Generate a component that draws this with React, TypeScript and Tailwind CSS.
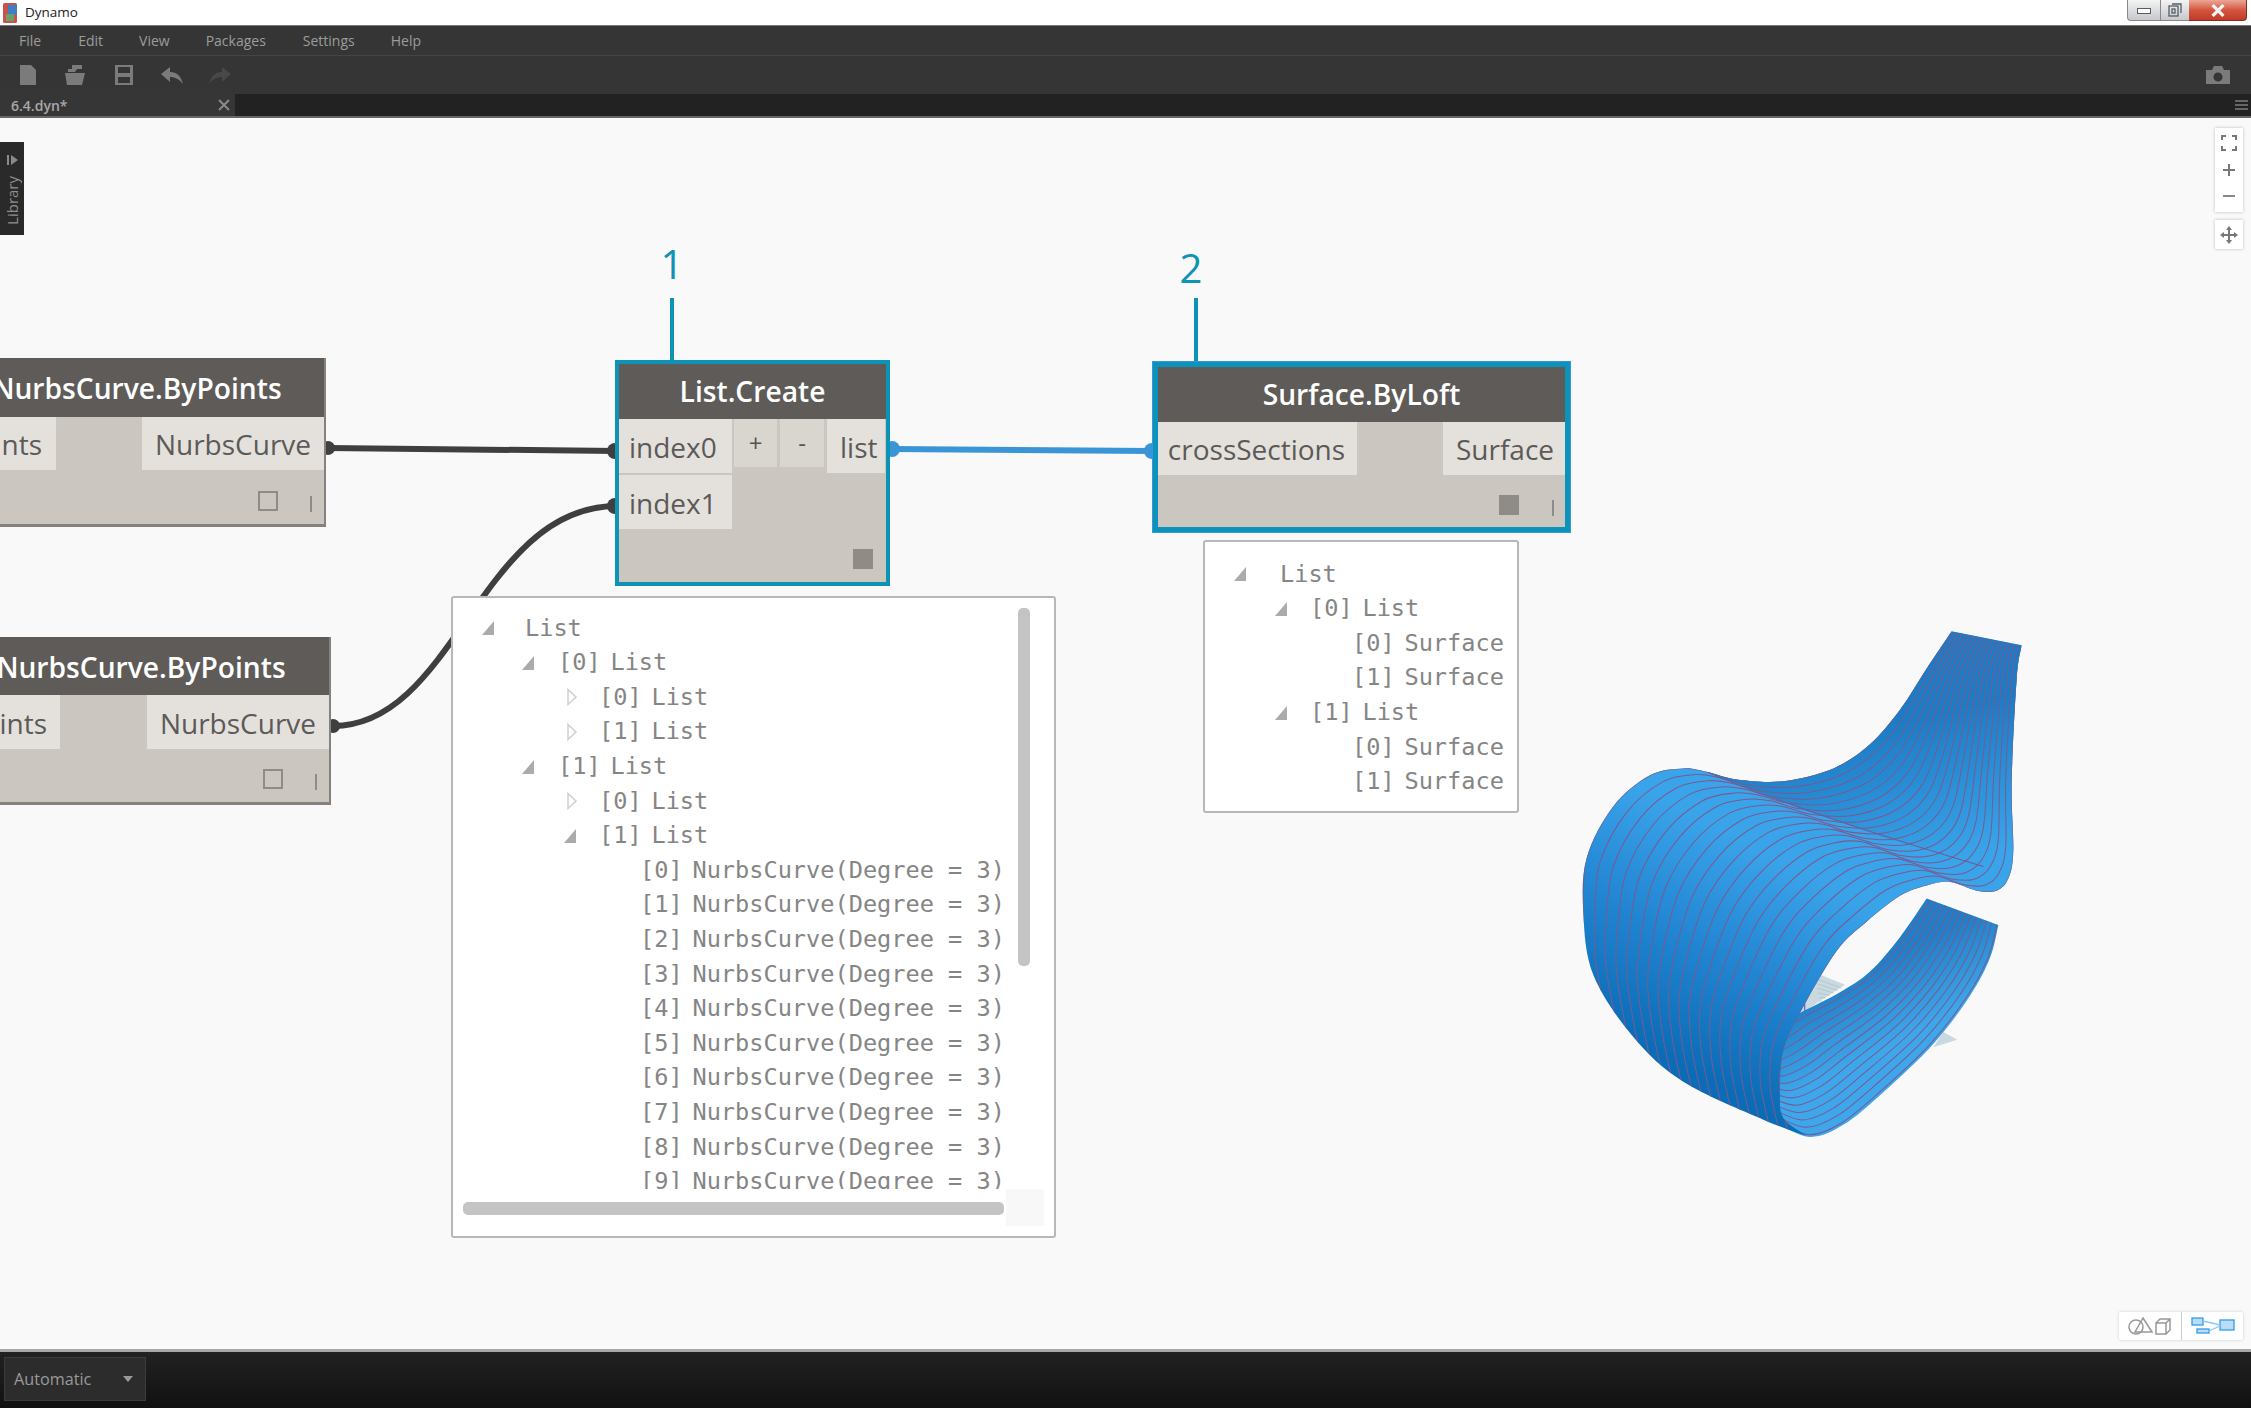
import type { ReactNode } from "react";

const FONT = "font-['Open_Sans',sans-serif]";
const MONO = "font-['DejaVu_Sans_Mono',monospace]";

type Pt = [number, number];

// Catmull-Rom through the points, good enough for the contour lines
const smooth = (pts: Pt[]) => {
  let d = `M${pts[0][0]} ${pts[0][1]}`;
  for (let i = 0; i < pts.length - 1; i++) {
    const p0 = pts[Math.max(i - 1, 0)];
    const p1 = pts[i];
    const p2 = pts[i + 1];
    const p3 = pts[Math.min(i + 2, pts.length - 1)];
    const c1x = p1[0] + (p2[0] - p0[0]) / 6;
    const c1y = p1[1] + (p2[1] - p0[1]) / 6;
    const c2x = p2[0] - (p3[0] - p1[0]) / 6;
    const c2y = p2[1] - (p3[1] - p1[1]) / 6;
    d += `C${c1x} ${c1y} ${c2x} ${c2y} ${p2[0]} ${p2[1]}`;
  }
  return d;
};

const mix = (a: Pt[], b: Pt[], t: number): Pt[] =>
  a.map((p, i) => [p[0] + (b[i][0] - p[0]) * t, p[1] + (b[i][1] - p[1]) * t]);

// contour family of the main sheet, first and last line
const lineOuter: Pt[] = [
  [170, 1300], [135, 1150], [105, 1000], [100, 880], [110, 720], [190, 570], [300, 480], [400, 460],
  [470, 470], [560, 492], [700, 497], [850, 460], [960, 390], [1050, 290], [1130, 170], [1205, 62],
];
const lineInner: Pt[] = [
  [720, 1540], [690, 1400], [700, 1280], [750, 1170], [860, 990], [950, 905], [1050, 830], [1130, 800],
  [1200, 790], [1280, 815], [1340, 815], [1375, 780], [1390, 700], [1385, 500], [1400, 200], [1415, 102],
];
// silhouette of the main sheet
const bodyEdge: Pt[] = [
  [770, 1527], [640, 1480], [400, 1370], [250, 1240], [130, 1060], [100, 880], [110, 720], [190, 570], [300, 480],
  [400, 460], [470, 470], [560, 492], [700, 497], [850, 460], [960, 390], [1050, 290], [1130, 170], [1205, 62],
];
const bodyBack: Pt[] = [
  [1415, 102], [1400, 200], [1385, 500], [1390, 700], [1375, 780], [1340, 815], [1280, 815], [1200, 790], [1130, 800],
  [1050, 830], [950, 905], [860, 990], [750, 1170], [700, 1280], [690, 1400], [700, 1475], [770, 1527],
];
const bandOuter: Pt[] = [
  [1345, 915], [1320, 1010], [1260, 1120], [1150, 1260], [1000, 1400], [880, 1495], [780, 1530], [680, 1490],
];
const bandInner: Pt[] = [
  [1130, 838], [1050, 950], [960, 1050], [870, 1110], [750, 1170], [700, 1200], [650, 1230], [620, 1250],
];

const bodyShape = `${smooth(bodyEdge)}L${smooth(bodyBack).slice(1)}Z`;
const bandShape = `${smooth(bandOuter)}L${smooth([...bandInner].reverse()).slice(1)}Z`;

const LoftSurface = () => (
  <svg viewBox="0 0 1500 1568" preserveAspectRatio="none" className="absolute left-[1550px] top-[492px] h-[540px] w-[500px]">
    <defs>
      <linearGradient id="bodyFill" gradientUnits="userSpaceOnUse" x1="450" y1="1350" x2="750" y2="750">
        <stop offset="0" stopColor="#0a6cb6" />
        <stop offset="0.5" stopColor="#2285d2" />
        <stop offset="1" stopColor="#3aa4ea" />
      </linearGradient>
      <linearGradient id="topFill" gradientUnits="userSpaceOnUse" x1="1150" y1="300" x2="1250" y2="720">
        <stop offset="0" stopColor="#1b7cc5" />
        <stop offset="1" stopColor="#3aa4ea" />
      </linearGradient>
      <linearGradient id="bandFill" gradientUnits="userSpaceOnUse" x1="1080" y1="980" x2="1180" y2="1180">
        <stop offset="0" stopColor="#1f7fc8" />
        <stop offset="1" stopColor="#3ea6ea" />
      </linearGradient>
      <clipPath id="bodyClip">
        <path d={bodyShape} />
      </clipPath>
      <clipPath id="bandClip">
        <path d={bandShape} />
      </clipPath>
    </defs>
    <path d="M800 1055L885 1088L740 1180Z" fill="#c8dae0" />
    <path d="M1180 1225L1222 1248L1150 1270Z" fill="#c8dae0" />
    {[0, 1, 2, 3, 4, 5].map((i) => (
      <path key={i} d={`M${795 + i * 3} ${1070 + i * 14}L${875 - i * 12} ${1098 + i * 7}`} stroke="#9db4bd" strokeWidth="1.5" />
    ))}
    <path d="M764 1142V1168" stroke="#6a6ae0" strokeWidth="4" />
    <path d={bandShape} fill="url(#bandFill)" />
    <g clipPath="url(#bandClip)">
      {Array.from({ length: 14 }, (_, i) => (
        <path key={i} d={smooth(mix(bandOuter, bandInner, (i + 0.3) / 14))} fill="none" stroke="#7a5a90" strokeWidth="3" />
      ))}
    </g>
    <path d={bodyShape} fill="url(#bodyFill)" />
    <g clipPath="url(#bodyClip)">
      <path d="M470 470C560 492 700 497 850 460C960 390 1050 290 1205 62L1415 102L1385 500L1390 700L1300 745L1000 660L760 580Z" fill="url(#topFill)" />
      {Array.from({ length: 20 }, (_, i) => (
        <path key={i} d={smooth(mix(lineOuter, lineInner, i / 19))} fill="none" stroke="#7a5a90" strokeWidth="3" />
      ))}
      <path d="M470 470C640 540 900 630 1300 745" fill="none" stroke="#6f5a90" strokeWidth="3" />
    </g>
  </svg>
);

const Port = ({ label, className }: { label: string; className: string }) => (
  <div className={`flex items-center overflow-hidden bg-[#e4e1dc] pt-[1px] text-[28px] text-[#5c5a58] ${className}`}>{label}</div>
);

const NodeTitle = ({ children, className }: { children: ReactNode; className: string }) => (
  <div className={`flex items-center justify-center whitespace-nowrap bg-[#5e5b58] text-[28.2px] font-semibold text-white ${className}`}>
    {children}
  </div>
);

const FreezeBox = ({ filled }: { filled?: boolean }) => (
  <div className={`h-[20px] w-[20px] border-2 border-[#8f8b86] ${filled ? "bg-[#8f8b86]" : ""}`} />
);

const Tri = ({ open }: { open?: boolean }) =>
  open ? (
    <svg viewBox="0 0 14 16" className="h-[16px] w-[14px] shrink-0">
      <path d="M13 1V15H1Z" fill="#ababab" />
    </svg>
  ) : (
    <svg viewBox="0 0 14 18" className="h-[18px] w-[14px] shrink-0">
      <path d="M3 1.5L11 9L3 16.5Z" fill="none" stroke="#cfcfcf" strokeWidth="1.5" />
    </svg>
  );

type Row = { index?: string; label: string; indent: string; gap?: string; open?: boolean };

const Rows = ({ rows }: { rows: Row[] }) => (
  <>
    {rows.map((row, i) => (
      <div key={i} className={`flex h-[34.6px] items-center whitespace-pre text-[23.6px] text-[#858585] ${MONO} ${row.indent}`}>
        {row.gap && <Tri open={row.open} />}
        {row.index && <span className={row.gap}>{row.index}</span>}
        <span className={row.index ? "ml-[9.8px]" : row.gap}>{row.label}</span>
      </div>
    ))}
  </>
);

const curves: Row[] = Array.from({ length: 10 }, (_, i) => ({
  index: `[${i}]`,
  label: "NurbsCurve(Degree = 3)",
  indent: "pl-[187px]",
}));

const listRows: Row[] = [
  { label: "List", indent: "pl-[28px]", gap: "ml-[30px]", open: true },
  { index: "[0]", label: "List", indent: "pl-[68px]", gap: "ml-[23px]", open: true },
  { index: "[0]", label: "List", indent: "pl-[112px]", gap: "ml-[20px]" },
  { index: "[1]", label: "List", indent: "pl-[112px]", gap: "ml-[20px]" },
  { index: "[1]", label: "List", indent: "pl-[68px]", gap: "ml-[23px]", open: true },
  { index: "[0]", label: "List", indent: "pl-[112px]", gap: "ml-[20px]" },
  { index: "[1]", label: "List", indent: "pl-[110px]", gap: "ml-[22px]", open: true },
  ...curves,
];

const surfaceRows: Row[] = [
  { label: "List", indent: "pl-[28px]", gap: "ml-[33px]", open: true },
  { index: "[0]", label: "List", indent: "pl-[69px]", gap: "ml-[22px]", open: true },
  { index: "[0]", label: "Surface", indent: "pl-[147px]" },
  { index: "[1]", label: "Surface", indent: "pl-[147px]" },
  { index: "[1]", label: "List", indent: "pl-[69px]", gap: "ml-[22px]", open: true },
  { index: "[0]", label: "Surface", indent: "pl-[147px]" },
  { index: "[1]", label: "Surface", indent: "pl-[147px]" },
];

const Wires = () => (
  <svg viewBox="0 0 2251 1231" className="absolute left-0 top-0 h-[1231px] w-[2251px]" fill="none">
    <path d="M328 330L617 333" stroke="#3f3f3f" strokeWidth="6" />
    <path d="M333 608C455 608 480 388 617 388" stroke="#3f3f3f" strokeWidth="6" />
    <path d="M892 331L1152 333" stroke="#3a95d6" strokeWidth="6" />
    <circle cx="328" cy="330" r="7" fill="#3f3f3f" />
    <circle cx="333" cy="608" r="7" fill="#3f3f3f" />
    <circle cx="615" cy="333" r="8" fill="#3f3f3f" />
    <circle cx="615" cy="388" r="8" fill="#3f3f3f" />
    <circle cx="892" cy="331" r="8" fill="#3a95d6" />
    <circle cx="1152" cy="333" r="8" fill="#3a95d6" />
    <path d="M672 180V242M1196 180V243" stroke="#0d93b3" strokeWidth="4" />
  </svg>
);

const toolIcon = "h-[22px] w-[24px] fill-[#7b7b7b]";

export default function App() {
  return (
    <div className={`flex h-[1408px] w-[2251px] flex-col overflow-hidden bg-white ${FONT}`}>
      {/* title bar */}
      <div className="flex h-[25px] shrink-0 items-center bg-white pl-[3px] text-[13.5px] text-[#222]">
        <svg viewBox="0 0 14 20" className="h-[20px] w-[14px]">
          <rect width="14" height="20" rx="1.5" fill="#c9534a" />
          <rect x="5" y="2" width="9" height="10" fill="#3f7fc4" />
          <rect x="3" y="11" width="8" height="7" fill="#6fa06a" />
        </svg>
        <span className="ml-[8px]">Dynamo</span>
        <div className="ml-auto mr-[4px] flex h-[21px] self-start">
          <div className="flex w-[33px] items-center justify-center rounded-bl-[4px] border-b border-l border-[#888] bg-gradient-to-b from-[#f4f4f4] to-[#c6c8cc]">
            <div className="mt-[2px] h-[6px] w-[14px] border border-[#555c68] bg-white" />
          </div>
          <div className="flex w-[29px] items-center justify-center border-b border-l border-[#888] bg-gradient-to-b from-[#f4f4f4] to-[#c6c8cc]">
            <svg viewBox="0 0 14 14" className="h-[14px] w-[14px]" fill="none" stroke="#555c68" strokeWidth="1.3">
              <path d="M4 1H13V10" />
              <rect x="1" y="3" width="9" height="10" />
              <rect x="4" y="6" width="3" height="4" />
            </svg>
          </div>
          <div className="flex w-[58px] items-center justify-center rounded-br-[4px] border-b border-r border-[#883020] bg-gradient-to-b from-[#e8a698] via-[#d4553e] to-[#c23a28]">
            <svg viewBox="0 0 14 12" className="h-[13px] w-[16px]">
              <path d="M2 1L12 11M12 1L2 11" stroke="#f2f2f2" strokeWidth="3" />
            </svg>
          </div>
        </div>
      </div>

      {/* menu */}
      <div className="flex h-[31px] shrink-0 items-center border-y border-t-[#777] border-b-[#454545] bg-[#353535] text-[14px] text-[#9c9c9c]">
        <span className="ml-[19px]">File</span>
        <span className="ml-[37px]">Edit</span>
        <span className="ml-[36px]">View</span>
        <span className="ml-[36px]">Packages</span>
        <span className="ml-[37px]">Settings</span>
        <span className="ml-[36px]">Help</span>
      </div>

      {/* toolbar */}
      <div className="flex h-[38px] shrink-0 items-center bg-[#353535] pl-[16px] pr-[20px]">
        <svg viewBox="0 0 24 22" className={toolIcon}>
          <path d="M4 1H15L20 6V21H4Z" />
        </svg>
        <svg viewBox="0 0 24 22" className={`ml-[23px] ${toolIcon}`}>
          <path d="M9 1H19V5H14L12 8H5V5H9ZM2 9H22L19 21H4Z" />
        </svg>
        <svg viewBox="0 0 24 22" className={`ml-[25px] ${toolIcon}`}>
          <path fillRule="evenodd" d="M3 1H21V21H3ZM6 3V9H18V3ZM6 13V19H18V13Z" />
        </svg>
        <svg viewBox="0 0 24 22" className={`ml-[24px] ${toolIcon}`}>
          <path d="M10 3V8C17 8 21 12 23 20C19 15 15 13 10 13V18L1 10Z" />
        </svg>
        <svg viewBox="0 0 24 22" className="ml-[24px] h-[22px] w-[24px] fill-[#484848]">
          <path d="M14 3V8C7 8 3 12 1 20C5 15 9 13 14 13V18L23 10Z" />
        </svg>
        <svg viewBox="0 0 26 18" className="ml-auto h-[18px] w-[26px] fill-[#7b7b7b]">
          <path fillRule="evenodd" d="M1 4H7L9 0H17L19 4H25V18H1ZM13 6.5A4.5 4.5 0 1 0 13 15.5A4.5 4.5 0 1 0 13 6.5Z" />
        </svg>
      </div>

      {/* tabs */}
      <div className="flex h-[24px] shrink-0 items-center border-b-2 border-[#666] bg-[#222]">
        <div className="flex h-full w-[235px] items-center justify-between bg-[#363636] pl-[11px] pr-[5px] text-[14px] font-semibold text-[#a8a8a8]">
          <span>6.4.dyn*</span>
          <svg viewBox="0 0 12 12" className="h-[12px] w-[12px]">
            <path d="M1 1L11 11M11 1L1 11" stroke="#8a8a8a" strokeWidth="2" />
          </svg>
        </div>
        <div className="ml-auto mr-[3px] flex w-[13px] flex-col gap-[2px]">
          <div className="h-[2px] bg-[#666]" />
          <div className="h-[2px] bg-[#666]" />
          <div className="h-[2px] bg-[#666]" />
        </div>
      </div>

      {/* canvas */}
      <div className="relative flex-1 overflow-hidden bg-[#f9f9f9]">
        <Wires />

        <div className="absolute left-0 top-[24px] flex h-[93px] w-[24px] flex-col items-center bg-[#2a2a2a] pt-[13px]">
          <svg viewBox="0 0 11 10" className="h-[10px] w-[11px] fill-[#8a8a8a]">
            <path d="M0 0H2V10H0ZM4 0L11 5L4 10Z" />
          </svg>
          <span className="mt-[11px] rotate-180 text-[15px] leading-[15px] text-[#8f8f8f] [writing-mode:vertical-rl]">Library</span>
        </div>

        <div className="absolute left-[672px] top-[122px] -translate-x-1/2 text-[40px] leading-[48px] text-[#0d93b3]">1</div>
        <div className="absolute left-[1191px] top-[126px] -translate-x-1/2 text-[40px] leading-[48px] text-[#0d93b3]">2</div>

        {/* NurbsCurve.ByPoints, upper */}
        <div className="absolute left-[-50px] top-[240px] h-[169px] w-[376px] border-b-[3px] border-r-2 border-[#85827d] bg-[#cbc6bf]">
          <NodeTitle className="h-[59px] pt-[2px]">NurbsCurve.ByPoints</NodeTitle>
          <div className="flex h-[53px] justify-between">
            <Port label="points" className="w-[106px] justify-end pr-[14px]" />
            <Port label="NurbsCurve" className="w-[182px] justify-center" />
          </div>
          <div className="flex items-center justify-end pr-[12px] pt-[20px]">
            <FreezeBox />
            <div className="ml-[32px] mt-[6px] h-[16px] w-[2px] bg-[#8f8b86]" />
          </div>
        </div>

        {/* NurbsCurve.ByPoints, lower */}
        <div className="absolute left-[-47px] top-[519px] h-[168px] w-[378px] border-b-[3px] border-r-2 border-[#85827d] bg-[#cbc6bf]">
          <NodeTitle className="h-[58px] pt-[2px]">NurbsCurve.ByPoints</NodeTitle>
          <div className="flex h-[54px] justify-between">
            <Port label="points" className="w-[107px] justify-end pr-[13px]" />
            <Port label="NurbsCurve" className="w-[182px] justify-center" />
          </div>
          <div className="flex items-center justify-end pr-[12px] pt-[19px]">
            <FreezeBox />
            <div className="ml-[32px] mt-[6px] h-[16px] w-[2px] bg-[#8f8b86]" />
          </div>
        </div>

        {/* List.Create */}
        <div className="absolute left-[615px] top-[242px] h-[226px] w-[275px] border-4 border-[#0d93b3] bg-[#cbc6bf]">
          <NodeTitle className="h-[55px]">List.Create</NodeTitle>
          <div className="flex items-start">
            <Port label="index0" className="h-[54px] w-[113px] pl-[10px]" />
            <div className="ml-[2px] flex h-[48px] w-[43px] items-center justify-center bg-[#d9d6d0] text-[24px] text-[#55534f]">+</div>
            <div className="ml-[3px] flex h-[48px] w-[44px] items-center justify-center bg-[#d9d6d0] text-[24px] text-[#55534f]">-</div>
            <Port label="list" className="ml-[3px] h-[54px] w-[58px] pl-[13px]" />
          </div>
          <Port label="index1" className="mt-[2px] h-[54px] w-[113px] pl-[10px]" />
          <div className="flex justify-end pr-[13px] pt-[20px]">
            <FreezeBox filled />
          </div>
        </div>

        {/* Surface.ByLoft */}
        <div className="absolute left-[1153px] top-[244px] h-[170px] w-[417px] border-[5px] border-[#0b93bb] bg-[#cbc6bf] shadow-[0_0_0_1px_#3a95d6]">
          <NodeTitle className="h-[55px] pb-[1px]">Surface.ByLoft</NodeTitle>
          <div className="flex h-[53px] justify-between">
            <Port label="crossSections" className="w-[199px] justify-center pr-[2px]" />
            <Port label="Surface" className="w-[122px] justify-center pl-[2px]" />
          </div>
          <div className="flex items-center justify-end pr-[11px] pt-[19px]">
            <FreezeBox filled />
            <div className="ml-[33px] mt-[6px] h-[16px] w-[2px] bg-[#8f8b86]" />
          </div>
        </div>

        {/* list.create preview */}
        <div className="absolute left-[451px] top-[478px] h-[642px] w-[605px] rounded-[3px] border-2 border-[#b8b8b8] bg-white">
          <div className="h-[591px] overflow-hidden pt-[13px]">
            <Rows rows={listRows} />
          </div>
          <div className="absolute left-[565px] top-[10px] h-[358px] w-[12px] rounded-[5px] bg-[#c4c4c4]" />
          <div className="absolute left-[10px] top-[604px] h-[13px] w-[541px] rounded-[5px] bg-[#c4c4c4]" />
          <div className="absolute left-[553px] top-[591px] h-[37px] w-[38px] bg-[#f8f8f8]" />
        </div>

        {/* surface preview */}
        <div className="absolute left-[1203px] top-[422px] h-[273px] w-[316px] rounded-[3px] border-2 border-[#b8b8b8] bg-white pt-[15px]">
          <Rows rows={surfaceRows} />
        </div>

        <LoftSurface />

        {/* zoom controls */}
        <div className="absolute left-[2215px] top-[10px] flex h-[84px] w-[28px] flex-col items-center justify-between bg-white pb-[9px] pt-[7px] shadow-[0_0_3px_#bbb]">
          <svg viewBox="0 0 16 16" className="h-[16px] w-[16px]" fill="none" stroke="#777" strokeWidth="2">
            <path d="M1 5V1H5M11 1H15V5M15 11V15H11M5 15H1V11" />
          </svg>
          <svg viewBox="0 0 14 14" className="h-[14px] w-[14px]" stroke="#777" strokeWidth="2">
            <path d="M7 1V13M1 7H13" />
          </svg>
          <svg viewBox="0 0 14 14" className="h-[14px] w-[14px]" stroke="#888" strokeWidth="2">
            <path d="M1 7H13" />
          </svg>
        </div>
        <div className="absolute left-[2215px] top-[102px] flex h-[29px] w-[28px] items-center justify-center bg-white shadow-[0_0_3px_#bbb]">
          <svg viewBox="0 0 18 18" className="h-[18px] w-[18px] fill-[#777]">
            <path d="M9 0L12 4H10V8H14V6L18 9L14 12V10H10V14H12L9 18L6 14H8V10H4V12L0 9L4 6V8H8V4H6Z" />
          </svg>
        </div>

        {/* view toggle */}
        <div className="absolute left-[2119px] top-[1194px] flex h-[28px] w-[124px] items-center rounded-[2px] bg-white shadow-[0_0_3px_#ccc]">
          <div className="flex h-full w-[63px] items-center justify-center border-r border-[#ccc]">
            <svg viewBox="0 0 44 18" className="h-[18px] w-[44px]" fill="none" stroke="#999" strokeWidth="1.5">
              <circle cx="8" cy="10" r="7" />
              <path d="M15 1L24 15H7Z" />
              <path d="M28 6H38V17H28ZM28 6L32 2H42V13L38 17M38 6L42 2" />
            </svg>
          </div>
          <div className="flex flex-1 items-center justify-center">
            <svg viewBox="0 0 44 18" className="h-[18px] w-[44px]" fill="none" stroke="#2f9df0" strokeWidth="1.3">
              <rect x="1" y="1" width="11" height="7" fill="#bcdcf5" />
              <rect x="6" y="12" width="12" height="4" fill="#bcdcf5" />
              <rect x="29" y="3" width="14" height="10" fill="#bcdcf5" />
              <path d="M12 4L29 8M18 14L29 9" stroke="#8cc6f4" />
            </svg>
          </div>
        </div>
      </div>

      {/* run bar */}
      <div className="flex h-[59px] shrink-0 items-start border-t-[3px] border-[#a8a8a8] bg-gradient-to-b from-[#222] to-[#111] pl-[4px] pt-[5px]">
        <div className="flex h-[44px] w-[142px] items-center justify-between border border-[#3c3c3c] bg-[#2c2c2c] pl-[9px] pr-[12px] text-[16.2px] text-[#9a9a9a]">
          <span>Automatic</span>
          <svg viewBox="0 0 10 6" className="h-[6px] w-[10px] fill-[#999]">
            <path d="M0 0H10L5 6Z" />
          </svg>
        </div>
      </div>
    </div>
  );
}
